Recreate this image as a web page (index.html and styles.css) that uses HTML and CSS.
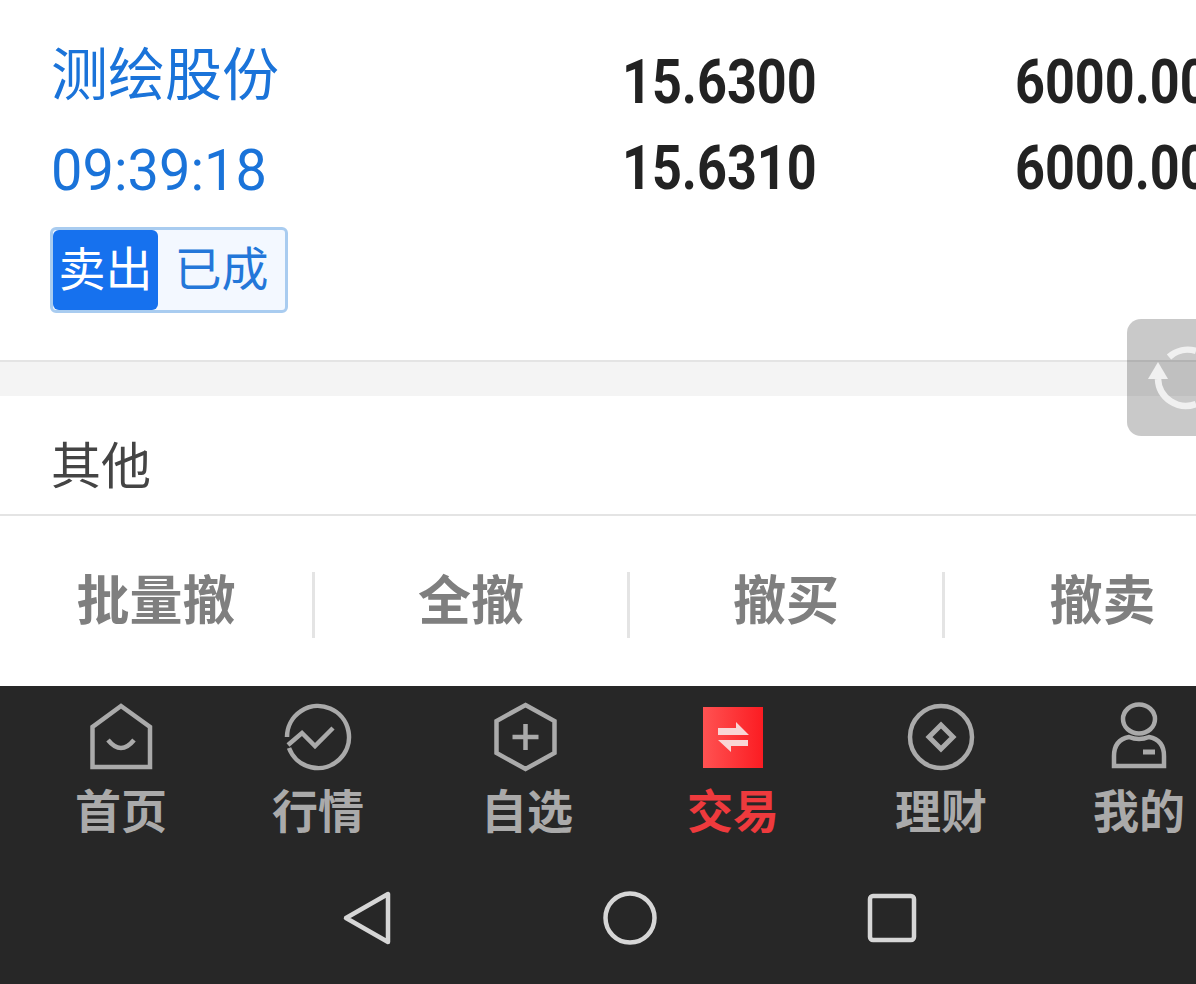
FILE: index.html

```html
<!DOCTYPE html>
<html lang="zh-CN">
<head>
  <meta charset="UTF-8" />
  <meta name="viewport" content="width=device-width, initial-scale=1.0"/>
  <title>交易</title>
  <link rel="stylesheet" href="styles.css">
</head>
<body>

  <div class="order">
    <div class="order-info">
      <div class="stock-name">测绘股份</div>
      <div class="order-time"><span>09:39:18</span></div>
      <div class="status">
        <span class="status-side">卖出</span>
        <span class="status-state">已成</span>
      </div>
    </div>
    <div class="order-nums">
      <div class="num-row"><span class="num-price"><span class="num">15.6300</span></span><span class="num">6000.00</span></div>
      <div class="num-row"><span class="num-price"><span class="num">15.6310</span></span><span class="num">6000.00</span></div>
    </div>
  </div>

  <div class="band"></div>

  <div class="other">其他</div>

  <div class="actions">
    <div class="action">批量撤</div>
    <div class="action">全撤</div>
    <div class="action">撤买</div>
    <div class="action">撤卖</div>
  </div>

  <div class="bottom">
    <nav class="tabs">
      <div class="tab">
        <svg class="tab-icon" viewBox="0 0 70 70"><path d="M35 4 L6.5 25 V65 H64 V25 Z"/><path d="M22 38 Q35 54 48 38"/></svg>
        <span>首页</span>
      </div>
      <div class="tab">
        <svg class="tab-icon" viewBox="0 0 70 70"><path d="M4 35 A31 31 0 1 1 6 46"/><path d="M5 43 L19 31 L32 44 L50 26"/></svg>
        <span>行情</span>
      </div>
      <div class="tab">
        <svg class="tab-icon" viewBox="0 0 70 70"><path d="M33.5 3 L62.5 19 V51 L33.5 67 L4.5 51 V19 Z"/><path d="M33.5 22 V48 M20.5 35 H46.5"/></svg>
        <span>自选</span>
      </div>
      <div class="tab tab-active">
        <svg class="tab-icon" viewBox="0 0 70 70">
          <defs><linearGradient id="tradeFill" x1="0" y1="0" x2="1" y2="0"><stop offset="0" stop-color="#ff5252"/><stop offset="1" stop-color="#fb1c22"/></linearGradient></defs>
          <rect class="trade-box" x="5" y="5" width="60" height="61" fill="url(#tradeFill)"/>
          <path class="trade-arrow" d="M20 33 V26 H38 V20 L51 33 Z"/>
          <path class="trade-arrow" d="M50 38 V44 H33 V50 L20 38 Z"/>
        </svg>
        <span>交易</span>
      </div>
      <div class="tab">
        <svg class="tab-icon" viewBox="0 0 70 70"><circle cx="35" cy="35" r="31"/><path class="coin-mark" d="M35 23 L47 35 L35 47 L23 35 Z"/></svg>
        <span>理财</span>
      </div>
      <div class="tab">
        <svg class="tab-icon" viewBox="0 0 70 70"><ellipse cx="35" cy="17" rx="16" ry="14.5"/><path d="M25 35 Q10 38 10 54 V64 H60 V54 Q60 38 45 35 Q35 39 25 35 Z"/><path class="user-dash" d="M39 50 H51"/></svg>
        <span>我的</span>
      </div>
    </nav>
    <div class="keys">
      <svg class="key" viewBox="0 0 56 56"><path d="M7 28 L49 4 V52 Z"/></svg>
      <svg class="key" viewBox="0 0 56 56"><circle cx="28" cy="28" r="24.5"/></svg>
      <svg class="key" viewBox="0 0 56 56"><rect x="6" y="6" width="44" height="44" rx="3"/></svg>
    </div>
  </div>

  <div class="refresh">
    <svg class="refresh-icon" viewBox="0 0 69 117">
      <path d="M42 38 A28 28 0 0 1 69 32 M31 60 A28 28 0 0 0 69 85"/>
      <path class="refresh-head" d="M31 43 L21 60 H41 Z"/>
    </svg>
  </div>

</body>
</html>
```

FILE: styles.css

```css
html, body {
  height: 100%;
}
body {
  position: relative;
  margin: 0;
  width: 1196px;
  height: 984px;
  overflow: hidden;
  background: #fff;
  font-family: "Noto Sans CJK SC", "Noto Sans", sans-serif;
}

/* order card */
.order {
  display: flex;
  box-sizing: border-box;
  height: 362px;
  padding: 27px 0 0 51px;
  border-bottom: 2px solid #e4e4e4;
}
.order-info {
  flex: 0 0 571px;
}
.stock-name {
  font-size: 57px;
  line-height: 86px;
  color: #1a73d9;
}
.order-time {
  margin-top: 14px;
  font-family: Roboto, sans-serif;
  font-size: 58px;
  line-height: 86px;
  color: #1a73d9;
}
.order-time span {
  display: inline-block;
  transform: scaleX(0.965);
  transform-origin: left;
}
.status {
  display: inline-flex;
  box-sizing: border-box;
  width: 238px;
  height: 86px;
  margin: 14px 0 0 -1px;
  border: 3px solid #a9ccf0;
  border-radius: 6px;
  background: #f3f8ff;
  font-size: 47px;
  line-height: 71px;
}
.status-side {
  width: 105px;
  border-radius: 6px;
  background: #1671ee;
  color: #fff;
  text-align: center;
}
.status-state {
  flex: 1;
  color: #2377d9;
  text-align: center;
}
.order-nums {
  flex: 1;
  margin-top: 12px;
  white-space: nowrap;
}
.num-row {
  display: flex;
  font-family: Roboto, sans-serif;
  font-weight: 700;
  font-size: 61px;
  line-height: 86px;
  color: #222;
}
.num-price {
  flex: 0 0 393px;
}
.num {
  display: inline-block;
  transform: scaleX(0.855);
  transform-origin: left;
}

.band {
  height: 34px;
  background: #f4f4f4;
}

.other {
  box-sizing: border-box;
  height: 120px;
  padding: 33px 0 0 51px;
  border-bottom: 2px solid #e4e4e4;
  font-size: 50px;
  line-height: 66px;
  color: #444;
}

/* action row */
.actions {
  display: flex;
  align-items: center;
  height: 170px;
}
.action {
  flex: 0 0 315px;
  box-sizing: border-box;
  height: 66px;
  margin-top: 8px;
  border-right: 3px solid #e4e4e4;
  font-size: 53px;
  font-weight: 700;
  line-height: 50px;
  color: #7f7f7f;
  text-align: center;
}
.action:last-child {
  border-right: none;
}

/* bottom dark area */
.bottom {
  height: 298px;
  background: #272727;
}
.tabs {
  display: grid;
  grid-template-columns: 202px 192px 226px 186px 230px 166px;
  padding: 16px 0 0 20px;
}
.tab {
  display: flex;
  flex-direction: column;
  align-items: center;
  font-size: 46px;
  font-weight: 700;
  line-height: 50px;
  color: #aaa;
  white-space: nowrap;
}
.tab-active {
  color: #ee3a3d;
}
.tab-icon {
  width: 70px;
  height: 70px;
  margin-bottom: 11px;
  fill: none;
  stroke: #aaa;
  stroke-width: 4.5;
}
.coin-mark {
  stroke-width: 5;
}
.user-dash {
  stroke-width: 5;
}
.trade-box {
  stroke: none;
}
.trade-arrow {
  fill: #f9d5d5;
  stroke: none;
}
.keys {
  display: flex;
  justify-content: center;
  gap: 206.5px;
  padding: 57px 0 0 63px;
}
.key {
  width: 56px;
  height: 56px;
  fill: none;
  stroke: #d6d6d6;
  stroke-width: 4.5;
  stroke-linejoin: round;
}

/* floating refresh button, cut by the right edge */
.refresh {
  position: absolute;
  top: 319px;
  left: 1127px;
  width: 69px;
  height: 117px;
  border-radius: 14px 0 0 14px;
  background: rgba(0, 0, 0, 0.21);
}
.refresh-icon {
  display: block;
  width: 69px;
  height: 117px;
  fill: none;
  stroke: #f0f0f0;
  stroke-width: 6.5;
}
.refresh-head {
  fill: #f0f0f0;
  stroke: none;
}
```
